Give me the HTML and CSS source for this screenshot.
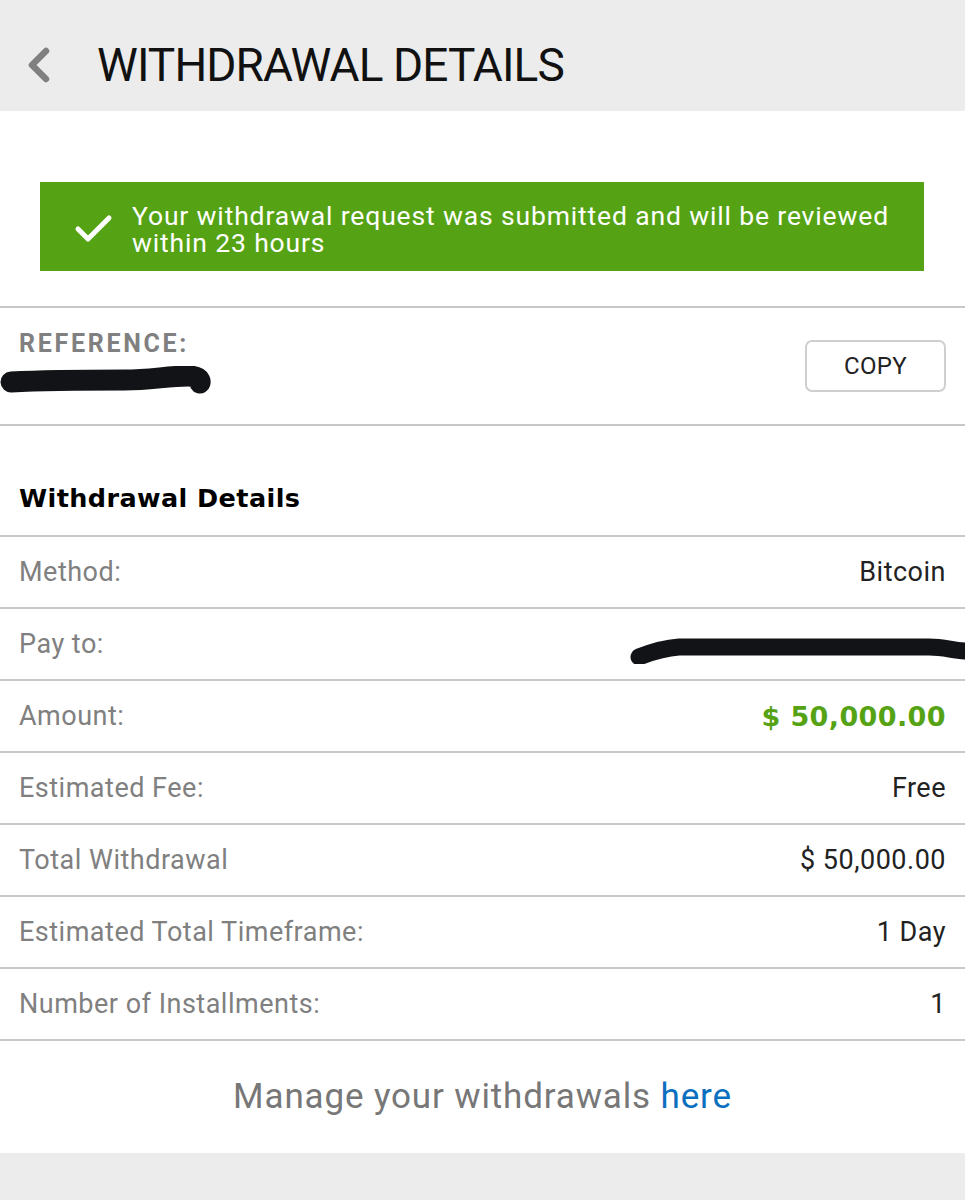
FILE: index.html
```html
<!DOCTYPE html>
<html lang="en">
<head>
<meta charset="utf-8">
<title>Withdrawal Details</title>
<link rel="stylesheet" href="styles.css">
</head>
<body>
<header class="topbar">
  <svg class="back" width="30" height="40" viewBox="0 0 30 40" aria-hidden="true">
    <path d="M22 6 L8 20 L22 34" fill="none" stroke="#808080" stroke-width="6.5" stroke-linecap="round" stroke-linejoin="round"/>
  </svg>
  <h1 class="title">WITHDRAWAL DETAILS</h1>
</header>
<main class="content">
  <div class="banner">
    <svg class="check" width="40" height="30" viewBox="0 0 40 30" aria-hidden="true">
      <path d="M4 15 L14 25 L35 4" fill="none" stroke="#ffffff" stroke-width="5" stroke-linecap="round" stroke-linejoin="round"/>
    </svg>
    <p class="banner-text">Your withdrawal request was submitted and will be reviewed within 23 hours</p>
  </div>

  <section class="ref">
    <div class="ref-info">
      <div class="ref-label">REFERENCE:</div>
      <svg class="ref-scribble" width="212" height="30" viewBox="0 0 212 30" aria-hidden="true">
        <path d="M11 16 C50 14 90 14 125 14 C150 14 168 10 188 10 C197 10 201 13 200 17" fill="none" stroke="#111316" stroke-width="21" stroke-linecap="round" stroke-linejoin="round"/>
      </svg>
    </div>
    <button class="copy">COPY</button>
  </section>

  <h2 class="section-title">Withdrawal Details</h2>

  <div class="details">
    <div class="row"><span class="label">Method:</span><span class="value">Bitcoin</span></div>
    <div class="row"><span class="label">Pay to:</span>
      <span class="value value-redacted">
        <svg class="pay-scribble" width="336" height="40" viewBox="0 0 336 40" aria-hidden="true">
          <path d="M10 33 C25 27 35 24 50 23 L300 23 C315 23 322 26 336 27" fill="none" stroke="#111316" stroke-width="17" stroke-linecap="round" stroke-linejoin="round"/>
        </svg>
      </span>
    </div>
    <div class="row"><span class="label">Amount:</span><span class="value value-amount">$ 50,000.00</span></div>
    <div class="row"><span class="label">Estimated Fee:</span><span class="value">Free</span></div>
    <div class="row"><span class="label">Total Withdrawal</span><span class="value">$ 50,000.00</span></div>
    <div class="row"><span class="label">Estimated Total Timeframe:</span><span class="value">1 Day</span></div>
    <div class="row"><span class="label">Number of Installments:</span><span class="value">1</span></div>
  </div>

  <p class="manage">Manage your withdrawals <a class="manage-link" href="#">here</a></p>
</main>
</body>
</html>
```

FILE: styles.css
```css
html, body {
  margin: 0;
  padding: 0;
}
body {
  background: #ececec;
  font-family: Roboto, "Liberation Sans", sans-serif;
  width: 965px;
  min-height: 1200px;
}
.topbar {
  height: 111px;
  background: #ececec;
  display: flex;
  align-items: center;
  box-sizing: border-box;
  padding-left: 24px;
  padding-top: 18px;
}
.back {
  display: block;
}
.title {
  margin: 0 0 0 43px;
  font-weight: 400;
  font-size: 46px;
  letter-spacing: -0.9px;
  color: #111;
  line-height: 1;
}
.content {
  background: #fff;
  height: 1042px;
  padding-top: 71px;
  box-sizing: border-box;
}
.banner {
  margin: 0 41px 0 40px;
  height: 89px;
  background: #55a314;
  display: flex;
  align-items: center;
  box-sizing: border-box;
  padding-left: 34px;
  padding-right: 20px;
  padding-top: 4px;
}
.check {
  display: block;
  flex: none;
}
.banner-text {
  margin: 0 0 0 18px;
  color: #fff;
  font-size: 26.5px;
  letter-spacing: 0.85px;
  line-height: 27px;
}
.ref {
  margin-top: 35px;
  border-top: 2px solid #c8c8c8;
  border-bottom: 2px solid #c8c8c8;
  height: 120px;
  box-sizing: border-box;
  display: flex;
  align-items: flex-start;
  justify-content: space-between;
  padding: 0 19px;
}
.ref-info {
  padding-top: 22px;
  margin-left: -19px;
}
.ref-label {
  margin-left: 19px;
  font-weight: 700;
  font-size: 25px;
  letter-spacing: 2.7px;
  color: #808080;
  line-height: 28px;
}
.ref-scribble {
  display: block;
  margin-top: 8px;
}
.copy {
  margin-top: 32px;
  width: 141px;
  height: 52px;
  border: 2px solid #cfcfcf;
  border-radius: 7px;
  background: #fff;
  font-family: Roboto, "Liberation Sans", sans-serif;
  font-size: 24px;
  color: #222;
  letter-spacing: 0.3px;
  padding: 0;
}
.section-title {
  margin: 0;
  height: 109px;
  box-sizing: border-box;
  padding: 57px 19px 0;
  font-family: "DejaVu Sans", Verdana, sans-serif;
  font-weight: 700;
  font-size: 25.5px;
  line-height: 30px;
  color: #000;
  letter-spacing: 0.4px;
}
.details {
  border-top: 2px solid #c8c8c8;
}
.row {
  height: 72px;
  box-sizing: border-box;
  border-bottom: 2px solid #c8c8c8;
  display: flex;
  align-items: center;
  justify-content: space-between;
  padding: 0 19px;
  font-size: 27px;
  letter-spacing: 0.5px;
}
.label {
  color: #808080;
}
.value {
  color: #222;
}
.value-redacted {
  display: flex;
  margin-right: -19px;
}
.pay-scribble {
  display: block;
}
.value-amount {
  font-family: "DejaVu Sans", Verdana, sans-serif;
  font-weight: 700;
  font-size: 27px;
  letter-spacing: 0.4px;
  color: #55a314;
}
.manage {
  margin: 0;
  padding-top: 36px;
  text-align: center;
  font-size: 35px;
  letter-spacing: 0.85px;
  color: #777;
  line-height: 40px;
}
.manage-link {
  color: #0b6fbf;
  text-decoration: none;
}
```
